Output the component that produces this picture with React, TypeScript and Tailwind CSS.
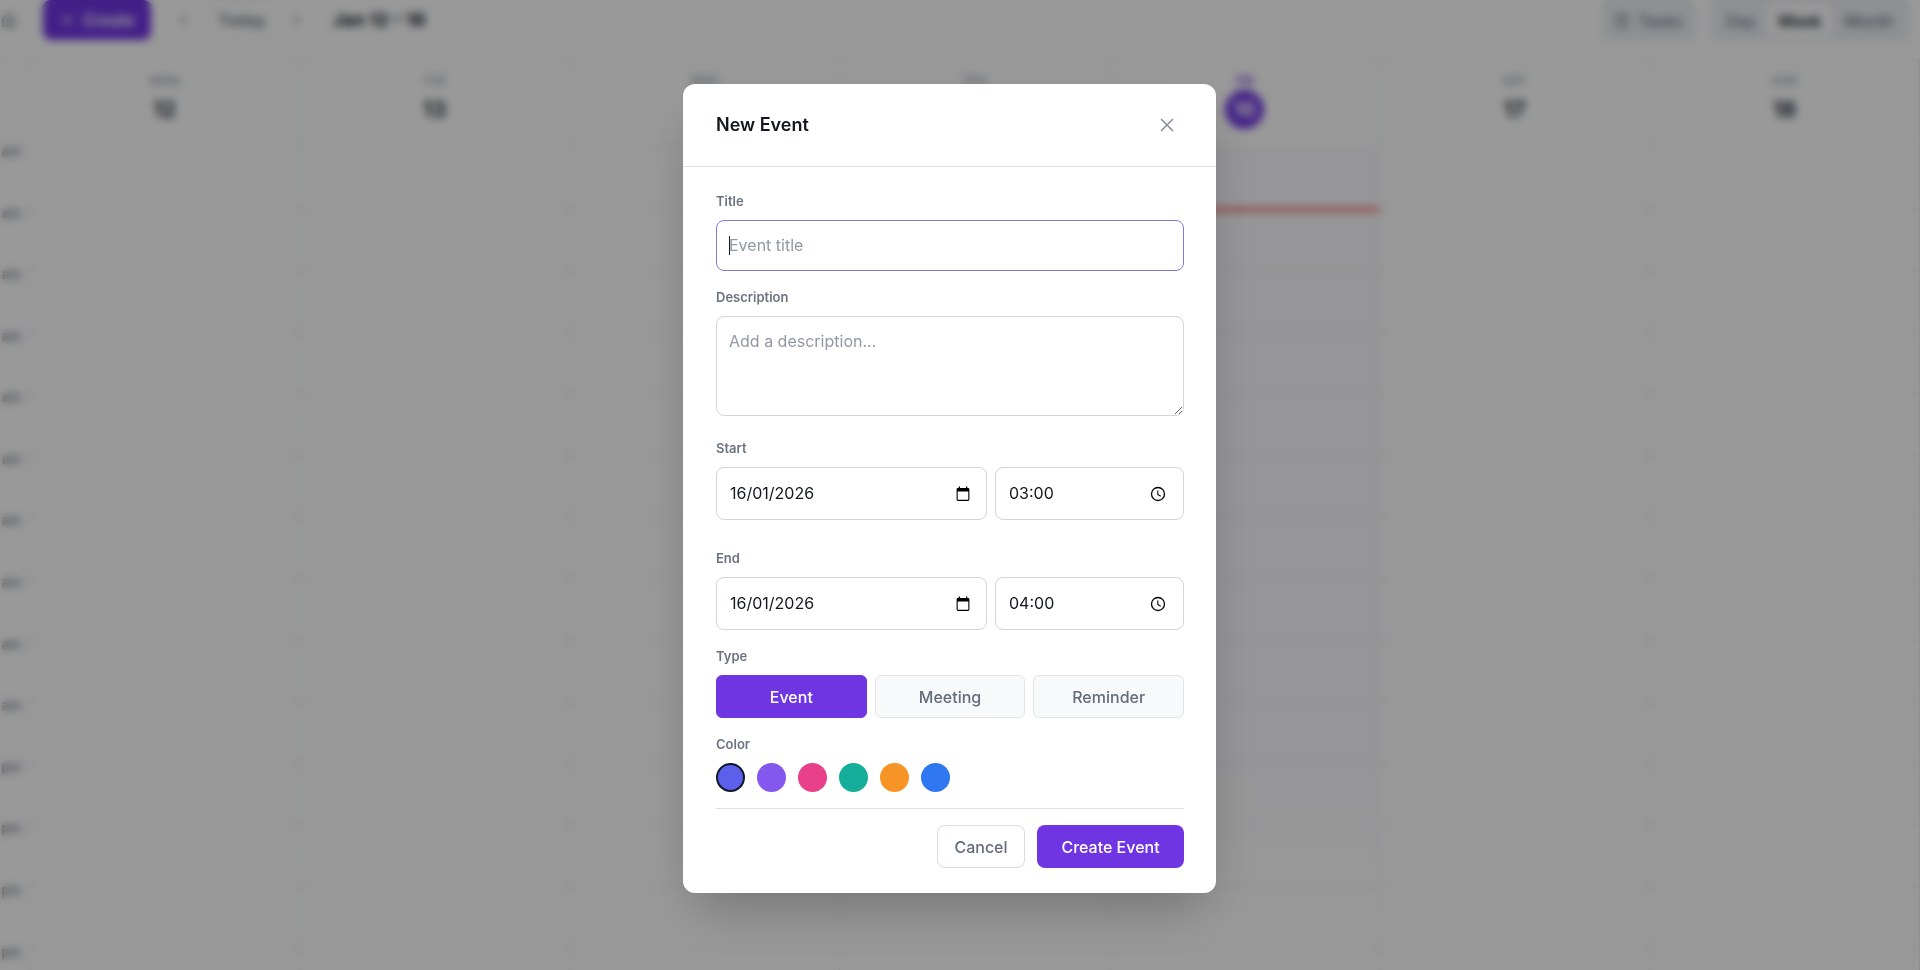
import React, { useState } from 'react';
import { ChevronLeft, ChevronRight, ClipboardList, Home, Plus, X } from 'lucide-react';

const days = [
  { name: 'MON', date: 12 },
  { name: 'TUE', date: 13 },
  { name: 'WED', date: 14 },
  { name: 'THU', date: 15 },
  { name: 'FRI', date: 16, today: true },
  { name: 'SAT', date: 17 },
  { name: 'SUN', date: 18 },
];

// 2 am to 3 pm
const hours = [2, 3, 4, 5, 6, 7, 8, 9, 10, 11, 12, 13, 14, 15];

const types = ['Event', 'Meeting', 'Reminder'];

const colors = [
  { name: 'Indigo', className: 'bg-[#5b5fec]' },
  { name: 'Violet', className: 'bg-[#8457ee]' },
  { name: 'Pink', className: 'bg-[#e9408c]' },
  { name: 'Teal', className: 'bg-[#14ae9a]' },
  { name: 'Orange', className: 'bg-[#f69525]' },
  { name: 'Blue', className: 'bg-[#3078f1]' },
];

const labelClass = 'block text-[13px] leading-[21px] font-semibold text-[#6b7280]';
const fieldClass = 'w-full rounded-lg border border-[#d3d5db] bg-white px-3 text-base text-[#14171f] outline-none';

function CalendarIcon() {
  return (
    <svg width="16" height="16" viewBox="0 0 16 16" fill="#000">
      <path d="M13 2h-.7V.6H11V2H5V.6H3.700V2H3c-.8 0-1.400.6-1.400 1.400v10.200c0 .8.6 1.400 1.400 1.400h10c.8 0 1.400-.6 1.400-1.400V3.400C14.400 2.600 13.800 2 13 2zm.3 11.800H2.700V5.600h10.600v8.200z" />
    </svg>
  );
}

function ClockIcon() {
  return (
    <svg width="16" height="16" viewBox="0 0 16 16" fill="none" stroke="#000" className="mr-0.5">
      <circle cx="8" cy="8" r="6.500" strokeWidth="1.300" />
      <path d="M7.800 4.500v3.900l2.900 1.800" strokeWidth="1.100" />
    </svg>
  );
}

function PickerField({ id, label, value, icon }: { id: string; label: string; value: string; icon: React.ReactNode }) {
  return (
    <div className="flex h-[53px] items-center rounded-lg border border-[#d3d5db] bg-white pr-[15px] pl-[13px]">
      <input
        id={id}
        type="text"
        aria-label={label}
        defaultValue={value}
        className="w-full min-w-0 flex-1 bg-transparent pb-0.5 text-base text-[#14171f] outline-none"
      />
      <button type="button" aria-label={`Pick ${label}`} className="cursor-pointer">
        {icon}
      </button>
    </div>
  );
}

function Toolbar() {
  return (
    <header className="flex h-[60px] items-start justify-between border-b border-[#e2e4ec] pr-2.5">
      <div className="flex h-10 items-center">
        <button type="button" aria-label="Home" className="flex h-10 w-[27px] items-center justify-end pr-2.5 text-gray-500">
          <Home size={16} className="shrink-0" />
        </button>
        <button
          type="button"
          className="ml-4 flex h-10 w-[108px] items-center justify-center gap-2 rounded-lg bg-[#6f35e2] text-base font-semibold text-white"
        >
          <Plus size={16} />
          Create
        </button>
        <button type="button" aria-label="Previous week" className="ml-4 flex h-8 w-8 items-center justify-center rounded-md border border-gray-100 text-gray-500">
          <ChevronLeft size={16} />
        </button>
        <button type="button" className="ml-2 h-10 w-[70px] rounded-md border border-gray-100 text-base font-semibold text-gray-500">
          Today
        </button>
        <button type="button" aria-label="Next week" className="ml-1 flex h-8 w-8 items-center justify-center rounded-md border border-gray-100 text-gray-500">
          <ChevronRight size={16} />
        </button>
        <h1 className="ml-5 text-lg font-bold text-gray-900">Jan 12 – 18</h1>
      </div>
      <div className="flex h-[41px] items-center gap-4">
        <button type="button" className="flex h-full w-[93px] items-center justify-center gap-2 rounded-lg bg-[#eef0f4] text-base font-medium text-gray-500">
          <ClipboardList size={16} />
          Tasks
        </button>
        <div className="flex h-full items-center rounded-lg bg-[#eef0f4] p-1 text-base font-medium text-gray-500">
          <button type="button" className="h-full w-[52px]">Day</button>
          <button type="button" className="h-full w-[65px] rounded-md bg-white font-semibold text-gray-900">Week</button>
          <button type="button" className="h-full w-[74px]">Month</button>
        </div>
      </div>
    </header>
  );
}

function WeekView() {
  return (
    <div className="flex">
      <div className="w-[29px] shrink-0 pt-[88px]">
        <div className="flex h-[862px] flex-col text-[13px] font-medium text-gray-500">
          {hours.map((hour) => (
            <div key={hour} className="flex flex-1 items-start justify-end pr-2 leading-[6px]">
              {hour < 12 ? 'am' : 'pm'}
            </div>
          ))}
        </div>
      </div>
      {days.map((day) => (
        <section key={day.name} className="flex-1 border-l border-[#e2e4ec] last:border-r">
          <div className="flex h-[88px] flex-col items-center border-b border-[#eeeff3] pt-3">
            <span className={`text-xs leading-[18px] font-semibold ${day.today ? 'text-[#6f35e2]' : 'text-gray-400'}`}>
              {day.name}
            </span>
            <span
              className={`flex size-[39px] items-center justify-center rounded-full text-[22px] font-semibold ${
                day.today ? 'bg-[#6f35e2] text-white' : 'text-gray-900'
              }`}
            >
              {day.date}
            </span>
          </div>
          <div className={`relative flex h-[862px] flex-col ${day.today ? 'bg-linear-to-b from-[#fafafd] from-70% to-white to-90%' : ''}`}>
            {hours.map((hour) => (
              <div key={hour} className="flex-1 border-b border-[#e2e4ec]" />
            ))}
            {day.today && <div className="absolute inset-x-0 top-[60px] h-[3px] bg-red-500" />}
          </div>
        </section>
      ))}
    </div>
  );
}

function NewEventDialog() {
  const [type, setType] = useState('Event');
  const [color, setColor] = useState('Indigo');

  return (
    <div role="dialog" aria-labelledby="dialog-title" className="w-full max-w-[533px] rounded-xl bg-white shadow-2xl">
      <div className="flex h-[83px] items-center justify-between border-b border-[#dddee1] pr-[38px] pl-[33px]">
        <h2 id="dialog-title" className="text-lg font-semibold text-[#14171f]">New Event</h2>
        <button type="button" aria-label="Close" className="cursor-pointer text-[#8b919e]">
          <X size={22} strokeWidth={1.800} />
        </button>
      </div>

      <form onSubmit={(e) => e.preventDefault()} className="pt-6 pr-8 pb-[25px] pl-[33px]">
        <label htmlFor="title" className={labelClass}>Title</label>
        <div className="relative mt-2">
          <input
            id="title"
            type="text"
            autoFocus
            placeholder="Event title"
            className={`${fieldClass} peer block h-[51px] pb-0.5 placeholder:text-[#9197a4] placeholder-shown:caret-transparent focus:border-[#7f7cd8]`}
          />
          <span className="pointer-events-none absolute top-4 left-[13px] hidden h-[19px] w-px bg-[#14171f] peer-placeholder-shown:block" />
        </div>

        <label htmlFor="description" className={`${labelClass} mt-4`}>Description</label>
        <textarea
          id="description"
          placeholder="Add a description..."
          className={`${fieldClass} mt-2 block h-[100px] py-3 placeholder:text-[#9197a4]`}
        />

        <label htmlFor="start-date" className={`${labelClass} mt-[22px]`}>Start</label>
        <div className="mt-2 grid grid-cols-[271fr_189fr] gap-2">
          <PickerField id="start-date" label="Start date" value="16/01/2026" icon={<CalendarIcon />} />
          <PickerField id="start-time" label="Start time" value="03:00" icon={<ClockIcon />} />
        </div>

        <label htmlFor="end-date" className={`${labelClass} mt-7`}>End</label>
        <div className="mt-2 grid grid-cols-[271fr_189fr] gap-2">
          <PickerField id="end-date" label="End date" value="16/01/2026" icon={<CalendarIcon />} />
          <PickerField id="end-time" label="End time" value="04:00" icon={<ClockIcon />} />
        </div>

        <span className={`${labelClass} mt-4`}>Type</span>
        <div className="mt-2 grid grid-cols-3 gap-2">
          {types.map((item) => (
            <button
              key={item}
              type="button"
              onClick={() => setType(item)}
              className={`h-[43px] cursor-pointer rounded-md border text-base font-medium ${
                item === type ? 'border-[#6f35e2] bg-[#6f35e2] text-white' : 'border-[#e2e4e9] bg-[#f8f9fb] text-[#646b79]'
              }`}
            >
              {item}
            </button>
          ))}
        </div>

        <span className={`${labelClass} mt-4`}>Color</span>
        <div className="mt-2 flex gap-3">
          {colors.map((item) => (
            <button
              key={item.name}
              type="button"
              aria-label={item.name}
              onClick={() => setColor(item.name)}
              className={`size-[29px] cursor-pointer rounded-full ${item.className} ${
                item.name === color ? 'border-2 border-[#111827]' : ''
              }`}
            />
          ))}
        </div>

        <div className="mt-4 flex justify-end gap-3 border-t border-[#dddee1] pt-4">
          <button type="button" className="h-[43px] w-[88px] cursor-pointer rounded-lg border border-[#d9dbe0] bg-white text-base font-medium text-[#646b79]">
            Cancel
          </button>
          <button type="submit" className="h-[43px] w-[147px] cursor-pointer rounded-lg bg-[#6f35e2] text-base font-medium text-white">
            Create Event
          </button>
        </div>
      </form>
    </div>
  );
}

function App() {
  return (
    <div className="h-screen overflow-hidden bg-white font-['Inter',sans-serif]">
      <Toolbar />
      <WeekView />
      <div className="fixed inset-0 flex items-start justify-center overflow-y-auto bg-black/40 pt-[84px] pr-[21px] backdrop-blur-xs">
        <NewEventDialog />
      </div>
    </div>
  );
}

export default App;
